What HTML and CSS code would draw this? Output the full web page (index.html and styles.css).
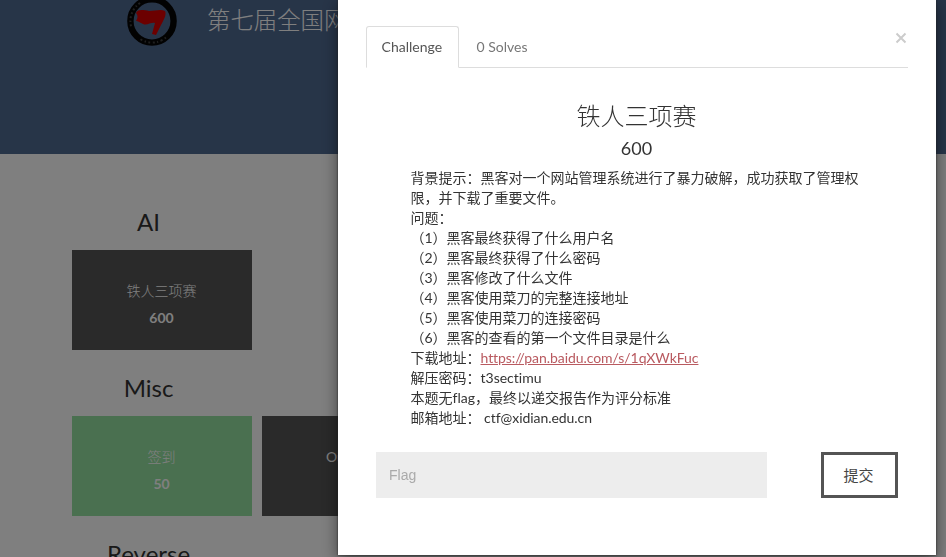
FILE: index.html
```html
<!DOCTYPE html>
<html lang="zh-CN">
<head>
<meta charset="utf-8">
<title>Challenges</title>
<link rel="stylesheet" href="styles.css">
</head>
<body>
<div class="page">
  <header class="banner">
    <svg class="logo" viewBox="0 0 50 50" width="50" height="50">
      <circle cx="25" cy="25" r="21.6" fill="none" stroke="#050505" stroke-width="6.4"/>
      <circle cx="25" cy="25" r="21.6" fill="none" stroke="#666" stroke-width="2" stroke-dasharray="1.6 2.6 2.2 2.4 1.2 2.2 2 2.6 1.8 2.4 1.4 2.6 2 16.5 0 0 1.8 2.4 1.4 2.4 2 2.4 1.6 2.4 1.8 2.4 1.4 2.4 2 100" stroke-dashoffset="0" transform="rotate(50 25 25)" opacity=".6"/>
      <path d="M9 17C11 13 16 14 22 15C28 15 34 13 38 15C40 19 36 25 34 29L29 39L25 38L28 27C24 26 20 30 16 28C12 26 11 25 9 25C11 22 11 19 9 17Z" fill="#d80000"/>
    </svg>
    <h1 class="site-title">第七届全国网络</h1>
  </header>
  <main class="board">
    <section class="category">
      <h3 class="category-name">AI</h3>
      <div class="cards">
        <div class="card"><p class="name">铁人三项赛</p><span class="points">600</span></div>
      </div>
    </section>
    <section class="category">
      <h3 class="category-name">Misc</h3>
      <div class="cards">
        <div class="card solved"><p class="name">签到</p><span class="points">50</span></div>
        <div class="card partial"><p class="name">Our</p></div>
      </div>
    </section>
    <section class="category">
      <h3 class="category-name">Reverse</h3>
    </section>
  </main>
</div>
<div class="backdrop"></div>
<div class="modal">
  <button class="close" aria-label="Close"><svg viewBox="0 0 12 12" width="12" height="12"><path d="M1.5 1.5l9 9M10.5 1.5l-9 9" stroke="#ccc" stroke-width="2"/></svg></button>
  <nav class="tabs">
    <a class="tab active">Challenge</a>
    <a class="tab">0 Solves</a>
  </nav>
  <h3 class="title">铁人三项赛</h3>
  <h4 class="value">600</h4>
  <div class="desc">背景提示：黑客对一个网站管理系统进行了暴力破解，成功获取了管理权<br>限，并下载了重要文件。<br>问题：<br>（1）黑客最终获得了什么用户名<br>（2）黑客最终获得了什么密码<br>（3）黑客修改了什么文件<br>（4）黑客使用菜刀的完整连接地址<br>（5）黑客使用菜刀的连接密码<br>（6）黑客的查看的第一个文件目录是什么<br>下载地址：<a class="link">https://pan.baidu.com/s/1qXWkFuc</a><br>解压密码：t3sectimu<br>本题无flag，最终以递交报告作为评分标准<br>邮箱地址： <span class="mail">ctf@xidian.edu.cn</span></div>
  <form class="submit-row">
    <input class="flag" type="text" placeholder="Flag">
    <button class="submit" type="button">提交</button>
  </form>
</div>
</body>
</html>
```
FILE: styles.css
```css
* { box-sizing: border-box; }
body {
  margin: 0;
  height: 557px;
  overflow: hidden;
  background: #fff;
  color: #333;
  font-family: Lato, "Noto Sans CJK SC", sans-serif;
  font-size: 14px;
}
h1, h3, h4, p { margin: 0; font-weight: 400; }
.page { height: 557px; overflow: hidden; }
.banner {
  display: flex;
  height: 154px;
  padding-left: 127px;
  background: #4f6a91;
}
.logo { flex: none; margin-top: -4px; }
.site-title {
  margin: 4px 0 0 30px;
  color: #fff;
  font-size: 23.4px;
  font-weight: 300;
  line-height: 32px;
  white-space: nowrap;
}
.board { padding: 50px 0 0 72px; }
.category { height: 166px; }
.category-name {
  width: 153px;
  height: 46px;
  font-size: 24px;
  line-height: 36px;
  text-align: center;
}
.cards { display: flex; gap: 10px; }
.card {
  flex: none;
  width: 180px;
  height: 100px;
  padding: 31px 1px 0 0;
  background: #545454;
  color: #fff;
  text-align: center;
}
.card .name { font-weight: 300; line-height: 20px; }
.card.partial .name { padding-right: 27px; font-weight: 400; }
.points { display: block; margin-top: 7px; font-weight: 700; line-height: 20px; }
.solved { background: #94e0a0; }
.backdrop { position: fixed; inset: 0; background: rgba(0, 0, 0, .5); }
.modal {
  position: fixed;
  top: 0;
  left: 338px;
  width: 598px;
  height: 555px;
  padding: 26px 28px 0;
  background: #fff;
  box-shadow: 0 0 2px #222, 0 5px 15px rgba(0, 0, 0, .5);
}
.close {
  position: absolute;
  top: 32px;
  right: 29px;
  display: flex;
  padding: 0;
  border: 0;
  background: none;
}
.tabs { display: flex; height: 42px; border-bottom: 1px solid #ddd; }
.tab {
  height: 42px;
  padding: 0 17.6px;
  color: #777;
  line-height: 42px;
}
.tab.active {
  width: 93px;
  padding: 0 0 0 14.6px;
  border: 1px solid #ddd;
  border-bottom-color: #fff;
  border-radius: 3px 3px 0 0;
  background: #fff;
  color: #555;
  line-height: 40px;
}
.title {
  margin: 30px 1px 0 0;
  font-size: 24px;
  font-weight: 300;
  line-height: 36px;
  text-align: center;
}
.value { margin: 3px 1px 0 0; font-size: 18px; line-height: 22px; text-align: center; }
.desc {
  margin: 9px 0 0 44.5px;
  line-height: 20px;
  white-space: nowrap;
  font-variant-ligatures: none;
}
.link { color: #b95a60; text-decoration: underline; letter-spacing: -.06px; }
.mail { letter-spacing: -.05px; }
.submit-row { display: flex; justify-content: space-between; margin: 24px 10px 0; }
.flag {
  width: 391px;
  height: 46px;
  padding: 0 13px;
  border: 0;
  background: #ededed;
  font: 14px "Liberation Sans", sans-serif;
}
.flag::placeholder { color: #aaa; }
.submit {
  width: 77px;
  height: 46px;
  padding: 0 2px 0 0;
  border: 3px solid #545454;
  background: #fff;
  color: #444;
  font: 15px/36px Lato, "Noto Sans CJK SC", sans-serif;
}
```
